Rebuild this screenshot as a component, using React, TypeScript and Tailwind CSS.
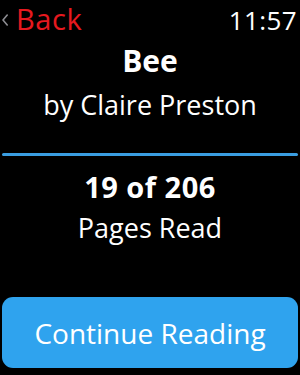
export default function App() {
  return (
    <div className="w-[300px] h-[375px] bg-black text-white flex flex-col overflow-hidden font-['Open_Sans',sans-serif]">
      {/* Header */}
      <div className="flex items-baseline justify-between h-[38px] pl-[2px] pr-[3px]">
        <div className="flex items-baseline">
          <svg className="w-[6px] h-[12px] mr-[8px] self-center translate-y-[1px]" viewBox="0 0 6 12" fill="none">
            <path d="M5.2 1L1 6L5.2 11" stroke="#8e8e93" strokeWidth={1.6} strokeLinecap="round" strokeLinejoin="round" />
          </svg>
          <span className="text-[29px] leading-[38px] tracking-[0.6px] text-[#e6191f]">Back</span>
        </div>
        <span className="text-[26px] leading-[38px] tracking-[0.4px]">11:57</span>
      </div>

      {/* Title */}
      <div className="flex flex-col items-center mt-[5px]">
        <h1 className="text-[30px] leading-[36px] font-bold">Bee</h1>
        <p className="text-[27px] leading-[36px] mt-[8px]">by Claire Preston</p>
      </div>

      <div className="mx-[2px] mt-[30px] h-[3px] bg-[#3a9de0] rounded-full" />

      {/* Progress */}
      <div className="flex flex-col items-center mt-[13px]">
        <span className="text-[29px] leading-[36px] font-bold tracking-[0.5px]">19 of 206</span>
        <span className="text-[27px] leading-[36px] mt-[5px]">Pages Read</span>
      </div>

      <button className="mx-[2px] mt-auto mb-[7px] h-[71px] rounded-[11px] bg-[#2fa3ee] text-[28px] leading-[36px] text-white">
        Continue Reading
      </button>
    </div>
  )
}
